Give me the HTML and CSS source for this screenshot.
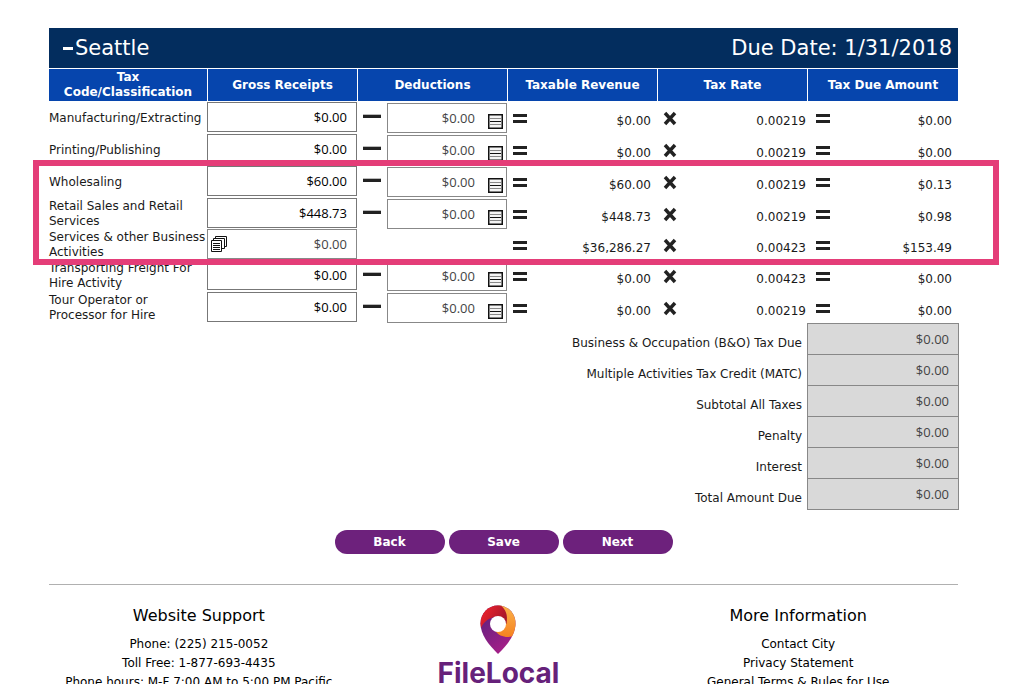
FILE: index.html
```html
<!DOCTYPE html>
<html lang="en">
<head>
<meta charset="utf-8">
<title>Seattle – FileLocal</title>
<link rel="stylesheet" href="styles.css">
</head>
<body>
<svg class="sprite" aria-hidden="true">
  <symbol id="minus" viewBox="0 0 18 16"><path d="M0 7.500h18" stroke="#bbb" stroke-width="1"/><path d="M0 9.500h18" stroke="#222" stroke-width="3"/></symbol>
  <symbol id="equals" viewBox="0 0 14 16"><path d="M0 5.500h14M0 11.500h14" stroke="#222" stroke-width="3"/></symbol>
  <symbol id="times" viewBox="0 0 14 16"><path d="M2 3l10 11M12 3L2 14" stroke="#222" stroke-width="3.400"/></symbol>
  <symbol id="list" viewBox="0 0 15 15"><path d="M.75.75h13.500v13.500H.75z" fill="#f4f4f4" stroke="#111" stroke-width="1.500"/><path d="M2 4.500h11M2 10.500h11" stroke="#888"/><path d="M2 7.500h11" stroke="#111"/></symbol>
  <symbol id="stack" viewBox="0 0 16 16"><g fill="#fff" stroke="#111"><path d="M4.500.5h11v10h-11z"/><path d="M2.500 2.500h11v10h-11z"/><path d="M.5 4.500h10v11H.5z"/></g><path d="M2 7.500h7M2 9.500h7M2 11.500h7M2 13.500h7" stroke="#111"/></symbol>
</svg>

<main>
  <section class="return">
    <header class="return-head">
      <h1><button class="collapse" type="button" aria-label="Collapse"></button>Seattle</h1>
      <p>Due Date: 1/31/2018</p>
    </header>
    <table class="taxes">
      <thead>
        <tr><th class="col-code" scope="col">Tax Code/Classification</th><th scope="col">Gross Receipts</th><th scope="col">Deductions</th><th scope="col">Taxable Revenue</th><th scope="col">Tax Rate</th><th scope="col">Tax Due Amount</th></tr>
      </thead>
      <tbody>
        <tr>
          <th scope="row"><label for="g1">Manufacturing/Extracting</label></th>
          <td><input class="money" id="g1" value="$0.00"></td>
          <td><div class="deduct"><svg class="op-minus"><use href="#minus"/></svg><div class="field"><input class="money muted" aria-label="Deductions" value="$0.00" readonly><button class="list" type="button" aria-label="Edit deductions"><svg><use href="#list"/></svg></button></div></div></td>
          <td><div class="calc revenue"><svg><use href="#equals"/></svg><span>$0.00</span></div></td>
          <td><div class="calc rate"><svg><use href="#times"/></svg><span>0.00219</span></div></td>
          <td><div class="calc due"><svg><use href="#equals"/></svg><span>$0.00</span></div></td>
        </tr>
        <tr>
          <th scope="row"><label for="g2">Printing/Publishing</label></th>
          <td><input class="money" id="g2" value="$0.00"></td>
          <td><div class="deduct"><svg class="op-minus"><use href="#minus"/></svg><div class="field"><input class="money muted" aria-label="Deductions" value="$0.00" readonly><button class="list" type="button" aria-label="Edit deductions"><svg><use href="#list"/></svg></button></div></div></td>
          <td><div class="calc revenue"><svg><use href="#equals"/></svg><span>$0.00</span></div></td>
          <td><div class="calc rate"><svg><use href="#times"/></svg><span>0.00219</span></div></td>
          <td><div class="calc due"><svg><use href="#equals"/></svg><span>$0.00</span></div></td>
        </tr>
        <tr>
          <th scope="row"><label for="g3">Wholesaling</label></th>
          <td><input class="money" id="g3" value="$60.00"></td>
          <td><div class="deduct"><svg class="op-minus"><use href="#minus"/></svg><div class="field"><input class="money muted" aria-label="Deductions" value="$0.00" readonly><button class="list" type="button" aria-label="Edit deductions"><svg><use href="#list"/></svg></button></div></div></td>
          <td><div class="calc revenue"><svg><use href="#equals"/></svg><span>$60.00</span></div></td>
          <td><div class="calc rate"><svg><use href="#times"/></svg><span>0.00219</span></div></td>
          <td><div class="calc due"><svg><use href="#equals"/></svg><span>$0.13</span></div></td>
        </tr>
        <tr class="tight">
          <th scope="row"><label for="g4">Retail Sales and Retail Services</label></th>
          <td><input class="money" id="g4" value="$448.73"></td>
          <td><div class="deduct"><svg class="op-minus"><use href="#minus"/></svg><div class="field"><input class="money muted" aria-label="Deductions" value="$0.00" readonly><button class="list" type="button" aria-label="Edit deductions"><svg><use href="#list"/></svg></button></div></div></td>
          <td><div class="calc revenue"><svg><use href="#equals"/></svg><span>$448.73</span></div></td>
          <td><div class="calc rate"><svg><use href="#times"/></svg><span>0.00219</span></div></td>
          <td><div class="calc due"><svg><use href="#equals"/></svg><span>$0.98</span></div></td>
        </tr>
        <tr class="tight">
          <th scope="row"><label for="g5">Services &amp; other Business Activities</label></th>
          <td><div class="field"><input class="money muted" id="g5" value="$0.00" readonly><button class="stack" type="button" aria-label="Open details"><svg><use href="#stack"/></svg></button></div></td>
          <td></td>
          <td><div class="calc revenue"><svg><use href="#equals"/></svg><span>$36,286.27</span></div></td>
          <td><div class="calc rate"><svg><use href="#times"/></svg><span>0.00423</span></div></td>
          <td><div class="calc due"><svg><use href="#equals"/></svg><span>$153.49</span></div></td>
        </tr>
        <tr>
          <th scope="row"><label for="g6">Transporting Freight For Hire Activity</label></th>
          <td><input class="money" id="g6" value="$0.00"></td>
          <td><div class="deduct"><svg class="op-minus"><use href="#minus"/></svg><div class="field"><input class="money muted" aria-label="Deductions" value="$0.00" readonly><button class="list" type="button" aria-label="Edit deductions"><svg><use href="#list"/></svg></button></div></div></td>
          <td><div class="calc revenue"><svg><use href="#equals"/></svg><span>$0.00</span></div></td>
          <td><div class="calc rate"><svg><use href="#times"/></svg><span>0.00423</span></div></td>
          <td><div class="calc due"><svg><use href="#equals"/></svg><span>$0.00</span></div></td>
        </tr>
        <tr class="tight">
          <th scope="row"><label for="g7">Tour Operator or Processor for Hire</label></th>
          <td><input class="money" id="g7" value="$0.00"></td>
          <td><div class="deduct"><svg class="op-minus"><use href="#minus"/></svg><div class="field"><input class="money muted" aria-label="Deductions" value="$0.00" readonly><button class="list" type="button" aria-label="Edit deductions"><svg><use href="#list"/></svg></button></div></div></td>
          <td><div class="calc revenue"><svg><use href="#equals"/></svg><span>$0.00</span></div></td>
          <td><div class="calc rate"><svg><use href="#times"/></svg><span>0.00219</span></div></td>
          <td><div class="calc due"><svg><use href="#equals"/></svg><span>$0.00</span></div></td>
        </tr>
      </tbody>
    </table>
    <div class="highlight"></div>
  </section>

  <div class="totals">
    <label for="t1">Business &amp; Occupation (B&amp;O) Tax Due</label><input id="t1" value="$0.00" readonly>
    <label for="t2">Multiple Activities Tax Credit (MATC)</label><input id="t2" value="$0.00" readonly>
    <label for="t3">Subtotal All Taxes</label><input id="t3" value="$0.00" readonly>
    <label for="t4">Penalty</label><input id="t4" value="$0.00" readonly>
    <label for="t5">Interest</label><input id="t5" value="$0.00" readonly>
    <label for="t6">Total Amount Due</label><input id="t6" value="$0.00" readonly>
  </div>

  <div class="actions">
    <button type="button">Back</button>
    <button type="button">Save</button>
    <button type="button">Next</button>
  </div>
</main>

<footer>
  <section>
    <h2>Website Support</h2>
    <p>Phone: (225) 215-0052</p>
    <p>Toll Free: 1-877-693-4435</p>
    <p>Phone hours: M-F 7:00 AM to 5:00 PM Pacific</p>
  </section>
  <div class="brand">
    <svg class="pin" viewBox="0 0 36 50" aria-hidden="true">
      <defs>
        <linearGradient id="purple" x1="0" y1="0" x2="0.600" y2="1"><stop offset="0.300" stop-color="#6b2080"/><stop offset="1" stop-color="#a81f88"/></linearGradient>
        <linearGradient id="red" x1="0" y1="0" x2="1" y2="0.500"><stop offset="0.300" stop-color="#e0202c"/><stop offset="1" stop-color="#a5172b"/></linearGradient>
        <linearGradient id="orange" x1="0" y1="0" x2="0" y2="1"><stop offset="0" stop-color="#fbb34c"/><stop offset="1" stop-color="#f58220"/></linearGradient>
        <clipPath id="drop"><path d="M18 .5C8 .5.5 8.500.5 18.500.5 30 9 40 18 49c9-9 17.500-19 17.500-30.500C35.500 8.500 28 .5 18 .5z"/></clipPath>
      </defs>
      <g clip-path="url(#drop)">
        <path d="M0 0h36v50H0z" fill="url(#purple)"/>
        <path d="M18 0h18v30.500c-8 3-17 1.500-21-5l11-8z" fill="url(#orange)"/>
        <path d="M0 0h20c6 4 8 10 6.500 19L18 11.500C10 12 4 16 1 23l-1-2z" fill="url(#red)"/>
      </g>
      <circle cx="18" cy="19" r="8" fill="#fff"/>
    </svg>
    <span>FileLocal</span>
  </div>
  <section>
    <h2>More Information</h2>
    <p><a href="#contact">Contact City</a></p>
    <p><a href="#privacy">Privacy Statement</a></p>
    <p><a href="#terms">General Terms &amp; Rules for Use</a></p>
  </section>
</footer>
</body>
</html>
```

FILE: styles.css
```css
* { box-sizing: border-box; }
html { scrollbar-width: none; }
body {
  margin: 0;
  padding: 28px 53px 0 49px;
  background: #fff;
  color: #1a1a1a;
  font: 12px/15px Verdana, "DejaVu Sans", sans-serif;
}
h1, h2, p { margin: 0; font-weight: normal; }
button { padding: 0; border: 0; background: none; cursor: pointer; }
svg { display: block; }
.sprite { display: none; }

.return { position: relative; }
.return-head {
  display: flex;
  justify-content: space-between;
  align-items: center;
  height: 40px;
  padding: 0 6px 0 14px;
  background: #032d5e;
  color: #fff;
  font-size: 21px;
  line-height: 24px;
}
.return-head h1 { display: flex; align-items: center; gap: 2px; font-size: 21px; }
.collapse { width: 10px; height: 3px; background: #fff; }

.taxes {
  width: 100%;
  margin-top: 1px;
  table-layout: fixed;
  border-collapse: separate;
  border-spacing: 0;
}
.taxes thead th {
  height: 33px;
  padding: 0 8px;
  border-left: 1px solid #fff;
  border-bottom: 1px solid #fff;
  background: #0645ad;
  color: #fff;
  font-weight: bold;
  text-align: center;
}
.taxes thead .col-code { width: 158px; border-left: 0; }
.taxes thead th:nth-child(n+2):nth-child(-n+5) { width: 16.5%; }
.taxes tbody tr { height: 32px; }
.taxes tbody .tight { height: 31px; }
.taxes tbody th { padding: 0; font-weight: normal; text-align: left; }
.taxes td { padding: 0; vertical-align: top; }

.money {
  display: block;
  width: 100%;
  height: 30px;
  padding: 0 9px;
  border: 1px solid #777;
  background: #fff;
  color: #000;
  font: 13px "Open Sans", sans-serif;
  text-align: right;
}
.muted { color: #444; border-color: #888; }
.deduct { display: flex; justify-content: space-between; padding: 1px 0 0 6px; }
.deduct .field { width: 120px; margin-bottom: -1px; }
.deduct .money { padding-right: 31px; }
.op-minus { width: 18px; height: 16px; margin-top: 4px; }
.field { position: relative; }
.list { position: absolute; right: 4px; top: 11px; }
.list svg { width: 15px; height: 15px; }
.stack { position: absolute; left: 4px; top: 7px; }
.stack svg { width: 16px; height: 16px; }

.calc { display: flex; justify-content: space-between; align-items: flex-start; padding-top: 8px; }
.calc svg { width: 14px; height: 16px; }
.calc span { padding-top: 4px; }
.revenue { padding-left: 6px; padding-right: 6px; }
.rate { padding-left: 6px; padding-right: 1px; }
.due { padding-left: 9px; padding-right: 6px; }

.highlight {
  position: absolute;
  top: 132px;
  left: -16px;
  right: -41px;
  height: 105px;
  border: 6px solid #e43d78;
  pointer-events: none;
}

.totals {
  display: grid;
  grid-template-columns: 1fr 152px;
  grid-auto-rows: 31px;
  column-gap: 5px;
  margin-right: -1px;
}
.totals label { padding-top: 13px; text-align: right; }
.totals input {
  width: 100%;
  height: 32px;
  padding: 0 9px;
  border: 1px solid #888;
  background: #d9d9d9;
  color: #444;
  font: 13px "Open Sans", sans-serif;
  text-align: right;
}

.actions { display: flex; justify-content: center; gap: 4px; padding: 21px 0 30px; }
.actions button {
  width: 110px;
  height: 24px;
  border-radius: 12px;
  background: #6d217c;
  color: #fff;
  font: bold 12px Verdana, "DejaVu Sans", sans-serif;
}

footer {
  display: grid;
  grid-template-columns: repeat(3, 1fr);
  padding: 20px 10px 0 0;
  border-top: 1px solid #b0b0b0;
  color: #000;
  text-align: center;
  line-height: 19px;
}
footer h2 { margin-bottom: 9px; font-size: 16px; line-height: 21px; }
footer a { color: inherit; text-decoration: none; }
.brand { display: flex; flex-direction: column; align-items: center; }
.pin { width: 36px; height: 50px; }
.brand span {
  color: #66217a;
  font: bold 28px/36px Inter, sans-serif;
}
```
